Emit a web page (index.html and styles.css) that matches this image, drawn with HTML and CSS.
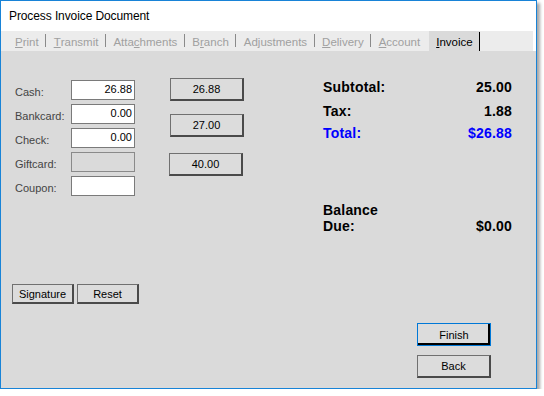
FILE: index.html
```
<!DOCTYPE html>
<html lang="en">
<head>
  <meta charset="UTF-8" />
  <title>Process Invoice Document</title>
  <link rel="stylesheet" href="styles.css">
</head>
<body>
  <div class="window">
    <div class="titlebar">Process Invoice Document</div>

    <div class="tabs">
      <span class="tab first"><u>P</u>rint</span>
      <span class="tab"><u>T</u>ransmit</span>
      <span class="tab">Atta<u>c</u>hments</span>
      <span class="tab">B<u>r</u>anch</span>
      <span class="tab">Ad<u>j</u>ustments</span>
      <span class="tab"><u>D</u>elivery</span>
      <span class="tab last"><u>A</u>ccount</span>
      <span class="tab active"><u>I</u>nvoice</span>
    </div>

    <div class="content">
      <div class="main">
        <div class="fields">
          <label>Cash:</label>
          <input class="amount" type="text" value="26.88" />
          <label>Bankcard:</label>
          <input class="amount" type="text" value="0.00" />
          <label>Check:</label>
          <input class="amount" type="text" value="0.00" />
          <label>Giftcard:</label>
          <input class="amount" type="text" value="" disabled />
          <label>Coupon:</label>
          <input class="amount" type="text" value="" />
        </div>

        <div class="quick">
          <button class="btn">26.88</button>
          <button class="btn second">27.00</button>
          <button class="btn third">40.00</button>
        </div>

        <div class="summary">
          <div class="row"><span>Subtotal:</span><span>25.00</span></div>
          <div class="row tax"><span>Tax:</span><span>1.88</span></div>
          <div class="row total"><span>Total:</span><span>$26.88</span></div>
          <div class="row balance"><span>Balance<br>Due:</span><span>$0.00</span></div>
        </div>
      </div>

      <div class="footer">
        <div class="left-actions">
          <button class="btn small">Signature</button>
          <button class="btn small">Reset</button>
        </div>
        <div class="right-actions">
          <button class="btn default">Finish</button>
          <button class="btn">Back</button>
        </div>
      </div>
    </div>
  </div>
</body>
</html>
```

FILE: styles.css
```
body {
  margin: 0;
  background: #fff;
  font-family: "Liberation Sans", Arial, sans-serif;
}
.window {
  box-sizing: border-box;
  width: 537px;
  height: 389px;
  border: 1px solid #1883d7;
  display: flex;
  flex-direction: column;
  box-shadow: 3px 3px 3px rgba(0, 0, 0, 0.35);
}
.titlebar {
  height: 30px;
  background: #fff;
  padding-left: 8px;
  font-size: 12px;
  line-height: 30px;
  color: #000;
  letter-spacing: -0.1px;
}
.tabs {
  height: 20px;
  background: #ececec;
  margin-right: 3px;
  display: flex;
  align-items: stretch;
  font-size: 11.5px;
}
.tab {
  display: flex;
  align-items: center;
  padding: 1px 7.5px 0;
  color: #a0a0a0;
  position: relative;
}
.tab.first {
  padding-left: 14px;
}
.tab::after {
  content: "";
  position: absolute;
  right: 0;
  top: 3px;
  bottom: 4px;
  width: 1px;
  background: #8a8a8a;
}
.tab.last::after {
  display: none;
}
.tab.active {
  margin-left: 1px;
  background: #dadada;
  color: #000;
}
.tab.active::after {
  background: #000;
  top: 1px;
  bottom: 0;
}
.content {
  flex: 1;
  background: #dadada;
  display: flex;
  flex-direction: column;
  font-size: 11px;
}
.main {
  display: flex;
  padding: 27px 0 0 14px;
}
.fields {
  display: grid;
  grid-template-columns: 56px 64px;
  grid-auto-rows: 20px;
  row-gap: 4px;
  margin-top: 2px;
  align-items: center;
}
.fields label {
  color: #444;
  padding-top: 3px;
}
.amount {
  box-sizing: border-box;
  width: 64px;
  height: 20px;
  margin: 0;
  border: 1px solid #7a7a7a;
  background: #fff;
  padding: 0 2px 2px 0;
  text-align: right;
  font-family: inherit;
  font-size: 11px;
  color: #000;
  outline: none;
}
.amount:disabled {
  background: #dadada;
  border-color: #8a8a8a;
}
.quick {
  display: flex;
  flex-direction: column;
  align-items: flex-start;
  margin-left: 35px;
}
.btn {
  box-sizing: border-box;
  width: 74px;
  height: 23px;
  margin: 0;
  padding: 0;
  background: #dcdcdc;
  border: 1px solid #707070;
  border-right: 2px solid #4a4a4a;
  border-bottom: 2px solid #4a4a4a;
  font-family: inherit;
  font-size: 11px;
  color: #000;
  cursor: pointer;
}
.quick .second {
  margin-top: 13px;
}
.quick .third {
  margin-top: 16px;
  margin-left: -1px;
}
.summary {
  margin-left: 79px;
  width: 189px;
  font-size: 14px;
  font-weight: bold;
  letter-spacing: 0.2px;
  color: #000;
}
.row {
  display: flex;
  justify-content: space-between;
  align-items: flex-end;
  line-height: 18px;
}
.row.tax {
  margin-top: 6px;
}
.row.total {
  margin-top: 4px;
  color: #0000ff;
}
.row.balance {
  margin-top: 60px;
  line-height: 16px;
}
.footer {
  margin-top: auto;
  display: flex;
  justify-content: space-between;
  align-items: flex-start;
  padding: 0 45px 10px 11px;
}
.left-actions {
  display: flex;
  gap: 3px;
}
.btn.small {
  width: 62px;
  height: 20px;
}
.right-actions {
  display: flex;
  flex-direction: column;
  gap: 9px;
  margin-top: 39px;
}
.btn.default {
  border: 1px solid #0078d7;
  box-shadow: inset -1px -1px 0 #000, inset -2px -2px 0 #000;
}
```
